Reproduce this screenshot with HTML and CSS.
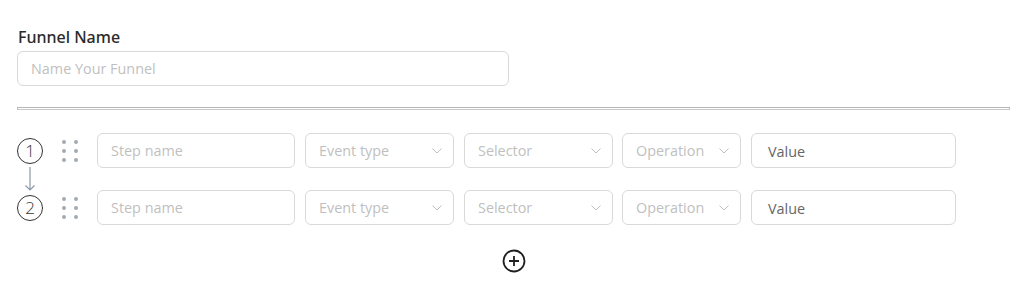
FILE: index.html
```html
<!DOCTYPE html>
<html>
<head>
<meta charset="utf-8">
<link rel="stylesheet" href="styles.css">
</head>
<body>
<div class="page">
  <div class="field-label">Funnel Name</div>
  <div class="name-input"><span class="ph">Name Your Funnel</span></div>
  <hr class="divider">
  <div class="steps">
    <div class="step">
      <span class="num">1</span>
      <span class="grip"><i></i><i></i><i></i><i></i><i></i><i></i></span>
      <div class="box w-step"><span class="ph">Step name</span></div>
      <div class="box sel w-event"><span class="ph">Event type</span><svg class="chev" width="10" height="6" viewBox="0 0 10 6"><path d="M0.5 0.5 L5 5 L9.5 0.5" fill="none" stroke="#bfbfbf" stroke-width="1"/></svg></div>
      <div class="box sel w-selector"><span class="ph">Selector</span><svg class="chev" width="10" height="6" viewBox="0 0 10 6"><path d="M0.5 0.5 L5 5 L9.5 0.5" fill="none" stroke="#bfbfbf" stroke-width="1"/></svg></div>
      <div class="box sel w-op"><span class="ph">Operation</span><svg class="chev" width="10" height="6" viewBox="0 0 10 6"><path d="M0.5 0.5 L5 5 L9.5 0.5" fill="none" stroke="#bfbfbf" stroke-width="1"/></svg></div>
      <div class="box value w-value"><span class="val">Value</span></div>
    </div>
    <div class="connector">
      <svg width="12" height="24" viewBox="0 0 12 24"><path d="M6 0 V23 M1.5 18.5 L6 23 L10.5 18.5" fill="none" stroke="#8c9aab" stroke-width="1.2"/></svg>
    </div>
    <div class="step">
      <span class="num">2</span>
      <span class="grip"><i></i><i></i><i></i><i></i><i></i><i></i></span>
      <div class="box w-step"><span class="ph">Step name</span></div>
      <div class="box sel w-event"><span class="ph">Event type</span><svg class="chev" width="10" height="6" viewBox="0 0 10 6"><path d="M0.5 0.5 L5 5 L9.5 0.5" fill="none" stroke="#bfbfbf" stroke-width="1"/></svg></div>
      <div class="box sel w-selector"><span class="ph">Selector</span><svg class="chev" width="10" height="6" viewBox="0 0 10 6"><path d="M0.5 0.5 L5 5 L9.5 0.5" fill="none" stroke="#bfbfbf" stroke-width="1"/></svg></div>
      <div class="box sel w-op"><span class="ph">Operation</span><svg class="chev" width="10" height="6" viewBox="0 0 10 6"><path d="M0.5 0.5 L5 5 L9.5 0.5" fill="none" stroke="#bfbfbf" stroke-width="1"/></svg></div>
      <div class="box value w-value"><span class="val">Value</span></div>
    </div>
  </div>
  <div class="add-row">
    <svg class="add" width="24" height="24" viewBox="0 0 24 24"><circle cx="12" cy="12" r="10.5" fill="none" stroke="#1f1f1f" stroke-width="1.8"/><path d="M12 7 V17 M7 12 H17" stroke="#1f1f1f" stroke-width="1.8"/></svg>
  </div>
</div>
</body>
</html>
```

FILE: styles.css
```css
* { box-sizing: border-box; }
body {
  margin: 0;
  background: #ffffff;
  font-family: "Open Sans", "Noto Sans", "Liberation Sans", sans-serif;
  color: #262626;
}
.page {
  width: 1010px;
  padding: 26px 0 0 17px;
}
.field-label {
  font-family: "Noto Sans", "Open Sans", sans-serif;
  font-size: 16px;
  line-height: 22px;
  font-weight: 500;
  color: #2b2b2b;
  padding-left: 1px;
  margin-bottom: 3px;
}
.name-input {
  width: 492px;
  height: 35px;
  border: 1px solid #d9d9d9;
  border-radius: 6px;
  display: flex;
  align-items: center;
  padding: 0 13px;
}
.ph {
  font-size: 14.4px;
  color: #bfbfbf;
  white-space: nowrap;
}
.val {
  font-size: 14.4px;
  color: #666666;
  margin-top: 2px;
}
.divider {
  margin: 21px 0 0 0;
  width: 993px;
  height: 3px;
  border: 1px solid #b8b8b8;
  border-bottom-color: #c8c8c8;
  background: #fff;
}
.steps {
  margin-top: 23px;
}
.step {
  display: flex;
  align-items: center;
  height: 35px;
}
.num {
  width: 26px;
  height: 26px;
  border: 1.4px solid #333;
  border-radius: 50%;
  display: flex;
  align-items: center;
  justify-content: center;
  font-size: 17px;
  line-height: 1;
  font-weight: 300;
  color: #333;
  flex: none;
}
.grip {
  margin-left: 19px;
  width: 16px;
  display: grid;
  grid-template-columns: 4px 4px;
  column-gap: 8px;
  row-gap: 5px;
  flex: none;
}
.grip i {
  width: 4px;
  height: 4px;
  border-radius: 50%;
  background: #a3abb5;
}
.box {
  height: 35px;
  border: 1px solid #d9d9d9;
  border-radius: 6px;
  display: flex;
  align-items: center;
  padding: 0 13px;
  margin-right: 10px;
  flex: none;
}
.grip + .box { margin-left: 19px; }
.sel { justify-content: space-between; padding-right: 11px; }
.value { padding-left: 16px; }
.chev { flex: none; }
.w-step { width: 198px; }
.w-event { width: 149px; }
.w-selector { width: 149px; margin-right: 9px; }
.w-op { width: 119px; }
.w-value { width: 205px; }
.connector {
  height: 22px;
  padding-left: 7px;
  display: flex;
  align-items: flex-end;
}
.connector svg { display: block; margin-bottom: -1px; }
.add-row {
  width: 993px;
  display: flex;
  justify-content: center;
  margin-top: 24px;
}
.add { display: block; }
```
